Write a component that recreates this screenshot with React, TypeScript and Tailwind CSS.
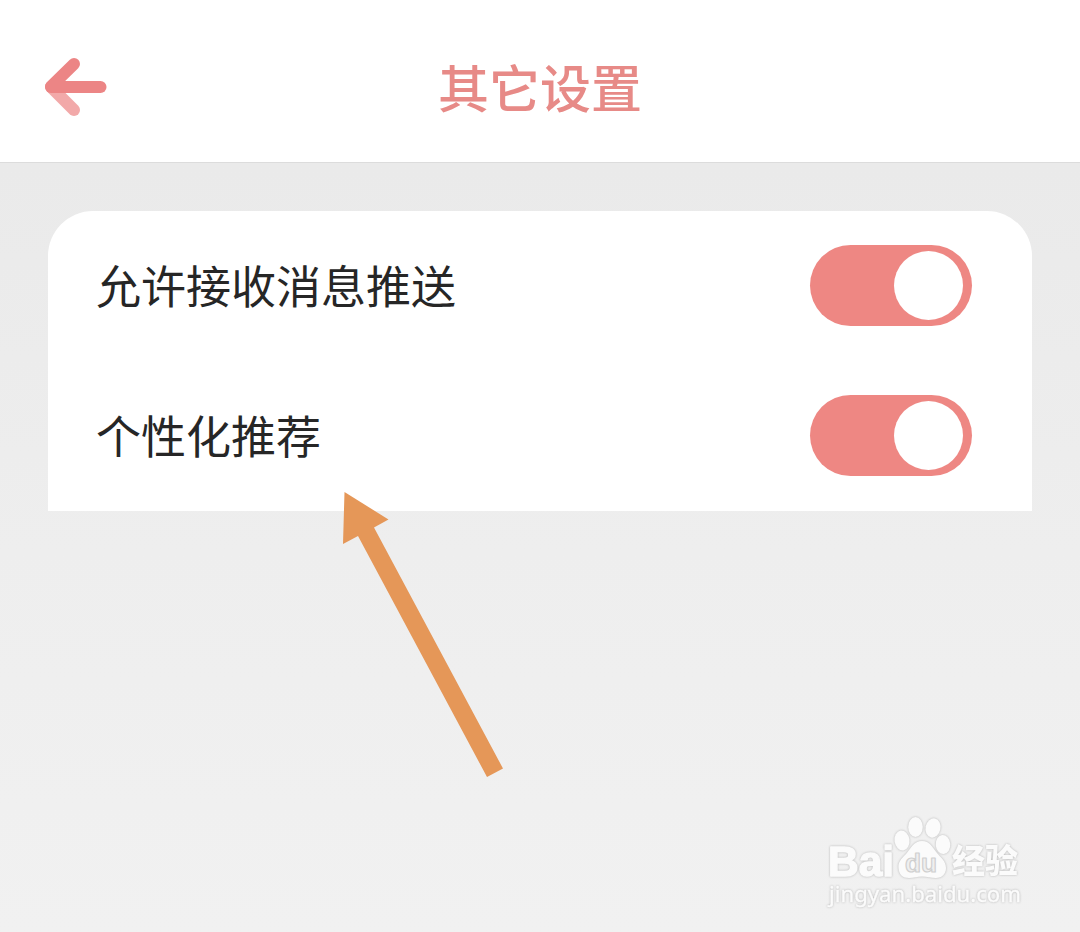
import { useState } from "react";

interface SettingRowProps {
  label: string;
}

function BackIcon() {
  return (
    <svg width="64" height="60" viewBox="0 0 64 60" fill="none">
      <path d="M9 31L31 53" stroke="#f2a9a9" strokeWidth="12" strokeLinecap="round" />
      <path d="M31 7L8 29.5" stroke="#ec8585" strokeWidth="12" strokeLinecap="round" />
      <path d="M8 30H57.500" stroke="#ec8585" strokeWidth="12" strokeLinecap="round" />
    </svg>
  );
}

function SettingRow({ label }: SettingRowProps) {
  const [enabled, setEnabled] = useState(true);

  return (
    <div className="flex h-[150px] items-center justify-between pl-12 pr-[60px]">
      <span className="mb-[3px] text-[45px] leading-none text-[#262626]">{label}</span>
      <button
        role="switch"
        aria-checked={enabled}
        aria-label={label}
        onClick={() => setEnabled(!enabled)}
        className={`mb-px flex h-[81px] w-[162px] items-center rounded-full px-[9px] ${
          enabled ? "justify-end bg-[#ee8783]" : "justify-start bg-gray-300"
        }`}
      >
        <span className="size-[69px] rounded-full bg-white" />
      </button>
    </div>
  );
}

function Watermark() {
  return (
    <svg
      className="absolute left-[810px] top-[800px]"
      width="230"
      height="125"
      viewBox="0 0 230 125"
      fill="#fbfbfb"
      strokeLinejoin="round"
    >
      <g className="[filter:drop-shadow(0_0_1px_#b4b4b4)]">
        <text x="18" y="75.500" fontSize="42" fontWeight="700" fontFamily="Liberation Sans, sans-serif" stroke="#fbfbfb" strokeWidth="1.5" textLength="66" lengthAdjust="spacingAndGlyphs">
          Bai
        </text>
        {/* Paw */}
        <ellipse cx="92" cy="40.5" rx="7.5" ry="10" transform="rotate(-8 92 40.5)" />
        <ellipse cx="105.5" cy="27" rx="7.3" ry="10" />
        <ellipse cx="123" cy="28" rx="7.5" ry="9.7" transform="rotate(12 123 28)" />
        <ellipse cx="133" cy="44.5" rx="7.3" ry="9.5" transform="rotate(-5 133 44.5)" />
        <path d="M112 41C104 41 101 48 96 54C91 59 88 62 88.500 68C89 75 93 78 99 78C104 78 107 76.500 112 76.500C117 76.500 121 78 126 78C132 78 136 74 136 68C136 61 131 58 127 53C122 47 120 41 112 41Z" />
        <text x="142" y="73" fontSize="33" fontWeight="900" fontFamily="Noto Sans CJK SC, sans-serif" textLength="66" lengthAdjust="spacingAndGlyphs">
          经验
        </text>
        <text x="19" y="102" fontSize="22.5" fontFamily="Noto Sans, sans-serif" stroke="#fbfbfb" strokeWidth="0.4" textLength="192" lengthAdjust="spacingAndGlyphs">
          jingyan.baidu.com
        </text>
      </g>
      <text x="95" y="72" fontSize="26" fontWeight="700" fontFamily="Liberation Sans, sans-serif" fill="#efefef" stroke="#d0d0d0" strokeWidth="1.2" textLength="32" lengthAdjust="spacingAndGlyphs">
        du
      </text>
    </svg>
  );
}

export default function App() {
  return (
    <div className="relative h-[932px] w-[1080px] overflow-hidden bg-[#f0f0f0] font-['Noto_Sans_CJK_SC',sans-serif]">
      <header className="grid h-[163px] grid-cols-[1fr_auto_1fr] items-center border-b border-[#dcdcdc] bg-white pb-3 pl-[43px] pr-[43px]">
        <button aria-label="返回" className="mt-6 w-16">
          <BackIcon />
        </button>
        <h1 className="mt-[23px] text-[51px] font-medium leading-none text-[#e78a87]">其它设置</h1>
      </header>

      <main className="h-[769px] bg-linear-to-b from-[#eaeaea] via-[#eeeeee] to-[#f1f1f1] px-12 pt-12">
        <section className="rounded-t-[45px] bg-white">
          <SettingRow label="允许接收消息推送" />
          <SettingRow label="个性化推荐" />
        </section>
      </main>

      {/* Pointer to the recommendation row */}
      <svg className="absolute left-[340px] top-[490px]" width="166" height="290" viewBox="340 490 166 290">
        <path d="M344.500 492L388.500 519.500L374 527.500L503 768.500L487 777L358 536L343 544Z" fill="#e59758" />
      </svg>

      <Watermark />
    </div>
  );
}
